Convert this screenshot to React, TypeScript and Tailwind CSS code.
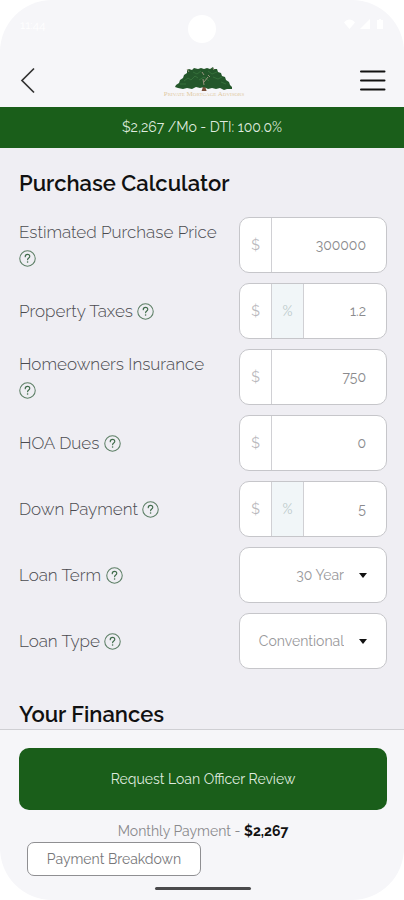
import { useState } from 'react';

type Field = {
  id: string;
  label: string;
  value: string;
  percent?: boolean;
};

type Choice = {
  id: string;
  label: string;
  options: string[];
};

const fields: Field[] = [
  { id: 'price', label: 'Estimated Purchase Price', value: '300000' },
  { id: 'taxes', label: 'Property Taxes', value: '1.2', percent: true },
  { id: 'insurance', label: 'Homeowners Insurance', value: '750' },
  { id: 'hoa', label: 'HOA Dues', value: '0' },
  { id: 'down', label: 'Down Payment', value: '5', percent: true },
];

const choices: Choice[] = [
  { id: 'term', label: 'Loan Term', options: ['30 Year', '20 Year', '15 Year'] },
  { id: 'type', label: 'Loan Type', options: ['Conventional', 'FHA', 'VA'] },
];

function HelpIcon() {
  return (
    <svg viewBox="0 0 18 18" className="inline-block size-[17px] align-[-3px]" fill="none" aria-hidden="true">
      <circle cx="9" cy="9" r="8.2" stroke="#5d7f66" strokeWidth="1.1" />
      <path
        d="M6.6 7.1c0-1.5 1.1-2.4 2.4-2.4s2.4.9 2.4 2.1c0 1.7-2.3 1.7-2.3 3.5"
        stroke="#3f6b4a"
        strokeWidth="1.2"
        strokeLinecap="round"
      />
      <circle cx="9.1" cy="12.7" r=".8" fill="#3f6b4a" />
    </svg>
  );
}

function Logo() {
  return (
    <svg viewBox="0 0 90 36" className="h-9 w-[90px]" role="img" aria-label="Logo">
      <path d="M44.500 21h3.500l-.4 5 1 3h-5l1-3z" fill="#7a4f38" />
      <path
        d="M17 25l1-2 3-2 1-3 3-2 1-3 3-2 0-3 2-1 3 1 2-2 4 1 3-1 3 1 3-1 3 1 3-2 1 2 3 0 1 3 3 1 1 3 3 1 1 3 3 2 1 3 2 2 0 2-5 0-3 1-4-2-4 1-4-1-4 1-4-2-4 1-4-1-4 2-5-1-4 1-5-1z"
        fill="#24572b"
      />
      <path
        d="M26 19l4-3 3 2 4-4 3 2M35 10l4 2 4-3M50 9l4 3 5-2M55 15l5 2 4-2M41 18l5-3 5 4M63 20l5 2M22 22l6 0"
        stroke="#35703a"
        strokeWidth="1"
        fill="none"
      />
      <path d="M46 23l-1-6M46 20l4-5M44 10l2 3M50 13l2 2M29 7l2 3M55 6l1 2" stroke="#a59a86" strokeWidth=".9" fill="none" />
      <text
        x="46"
        y="34"
        textAnchor="middle"
        fontFamily="Liberation Serif, serif"
        fontSize="7"
        fontVariant="small-caps"
        fill="#dfc9a2"
      >
        Private Mortgage Advisors
      </text>
    </svg>
  );
}

function StatusBar() {
  return (
    <div className="grid h-[53px] grid-cols-3 px-5 pt-[15px] text-white">
      <span className="text-xs leading-5">11:44</span>
      <span className="size-7 justify-self-center rounded-full bg-white" />
      <svg viewBox="0 0 40 12" className="mt-1 h-3 w-10 justify-self-end" fill="currentColor" aria-hidden="true">
        <path d="M0 3.5C3-.5 8-.5 11 3.5L5.5 10z" />
        <path d="M26 0v10H16z" />
        <path d="M33 1h2V0h2v1h2v9h-6z" />
      </svg>
    </div>
  );
}

function NumberRow({ field }: { field: Field }) {
  const [value, setValue] = useState(field.value);

  return (
    <div className="flex items-center justify-between">
      <label htmlFor={field.id} className="flex-1 pr-4">
        {field.label} <HelpIcon />
      </label>
      <div className="flex h-14 w-[148px] overflow-hidden rounded-[10px] border border-[#c6c6ca] bg-white text-[14px] font-normal">
        <span className="flex w-8 shrink-0 items-center justify-center border-r border-[#d0d0d4] text-[#b8b8bc]">$</span>
        {field.percent && (
          <span className="flex w-8 shrink-0 items-center justify-center border-r border-[#d0d0d4] bg-[#f1f6f8] text-[#b9c8c8]">
            %
          </span>
        )}
        <input
          id={field.id}
          inputMode="decimal"
          value={value}
          onChange={(e) => setValue(e.target.value)}
          className="w-full min-w-0 flex-1 pr-5 text-right text-[#8a8a8d] outline-none"
        />
      </div>
    </div>
  );
}

function SelectRow({ choice }: { choice: Choice }) {
  return (
    <div className="flex items-center justify-between">
      <label htmlFor={choice.id} className="flex-1 pr-4">
        {choice.label} <HelpIcon />
      </label>
      <div className="relative w-[148px]">
        <select
          id={choice.id}
          className="h-14 w-full appearance-none rounded-[10px] border border-[#c6c6ca] bg-white pr-[42px] text-right text-[14px] font-normal text-[#98989b] outline-none"
        >
          {choice.options.map((option) => (
            <option key={option}>{option}</option>
          ))}
        </select>
        <svg
          viewBox="0 0 8 5"
          className="pointer-events-none absolute top-[26px] right-5 h-[5px] w-2"
          aria-hidden="true"
        >
          <path d="M0 0h8L4 5z" fill="#111" />
        </svg>
      </div>
    </div>
  );
}

export default function App() {
  return (
    <div className="h-screen bg-white font-['Raleway','Lato',sans-serif]">
      <div className="flex h-full flex-col overflow-hidden rounded-[52px] bg-[#f6f6f9]">
        <header className="shrink-0">
          <StatusBar />
          <div className="flex h-[54px] items-center justify-between pr-[17px] pl-[19px]">
            <div className="flex flex-1">
              <button type="button" aria-label="Back">
                <svg viewBox="0 0 18 28" className="h-7 w-[18px]" fill="none" stroke="#333" strokeWidth="1.7">
                  <path d="M15 2.5L3 14.5l12 12" />
                </svg>
              </button>
            </div>
            <Logo />
            <div className="flex flex-1 justify-end">
              <button type="button" aria-label="Menu">
                <svg
                  viewBox="0 0 28 24"
                  className="h-6 w-7"
                  fill="none"
                  stroke="#111"
                  strokeWidth="2"
                  strokeLinecap="round"
                >
                  <path d="M2 3.5h23.500M2 12.5h23.500M2 21.5h23.500" />
                </svg>
              </button>
            </div>
          </div>
        </header>

        <p className="flex h-[41px] shrink-0 items-center justify-center bg-[#1a5e1a] text-[14px] text-[#dfeadf]">
          $2,267 /Mo - DTI: 100.0%
        </p>

        <main className="min-h-0 flex-1 overflow-y-auto bg-[#efeef3] pt-5 pr-[17px] pl-[19px] [scrollbar-width:none]">
          <h2 className="text-[22px] leading-[30px] font-semibold text-[#111]">Purchase Calculator</h2>
          <div className="mt-[19px] flex flex-col gap-[10px] text-[17px] leading-[26px] font-light text-[#4b4b50]">
            {fields.map((field) => (
              <NumberRow key={field.id} field={field} />
            ))}
            {choices.map((choice) => (
              <SelectRow key={choice.id} choice={choice} />
            ))}
          </div>
          <h2 className="mt-[30px] pb-5 text-[22px] leading-[30px] font-semibold text-[#111]">Your Finances</h2>
        </main>

        <footer className="flex shrink-0 flex-col border-t border-[#cfcfd3] pt-[18px] pr-[17px] pb-[10px] pl-[19px] text-[14px]">
          <button type="button" className="h-[62px] rounded-[10px] bg-[#1a5e1a] text-[#dfeadf]">
            Request Loan Officer Review
          </button>
          <p className="mt-[10px] text-center leading-[22px] text-[#8a8a8d]">
            Monthly Payment - <strong className="font-bold text-[#111]">$2,267</strong>
          </p>
          <button
            type="button"
            className="ml-2 h-[34px] w-[174px] rounded-[7px] border border-[#8f8f92] bg-white text-[#77777a]"
          >
            Payment Breakdown
          </button>
          <span className="mt-[11px] h-[3px] w-24 self-center rounded-full bg-[#4a4a4c]" />
        </footer>
      </div>
    </div>
  );
}
